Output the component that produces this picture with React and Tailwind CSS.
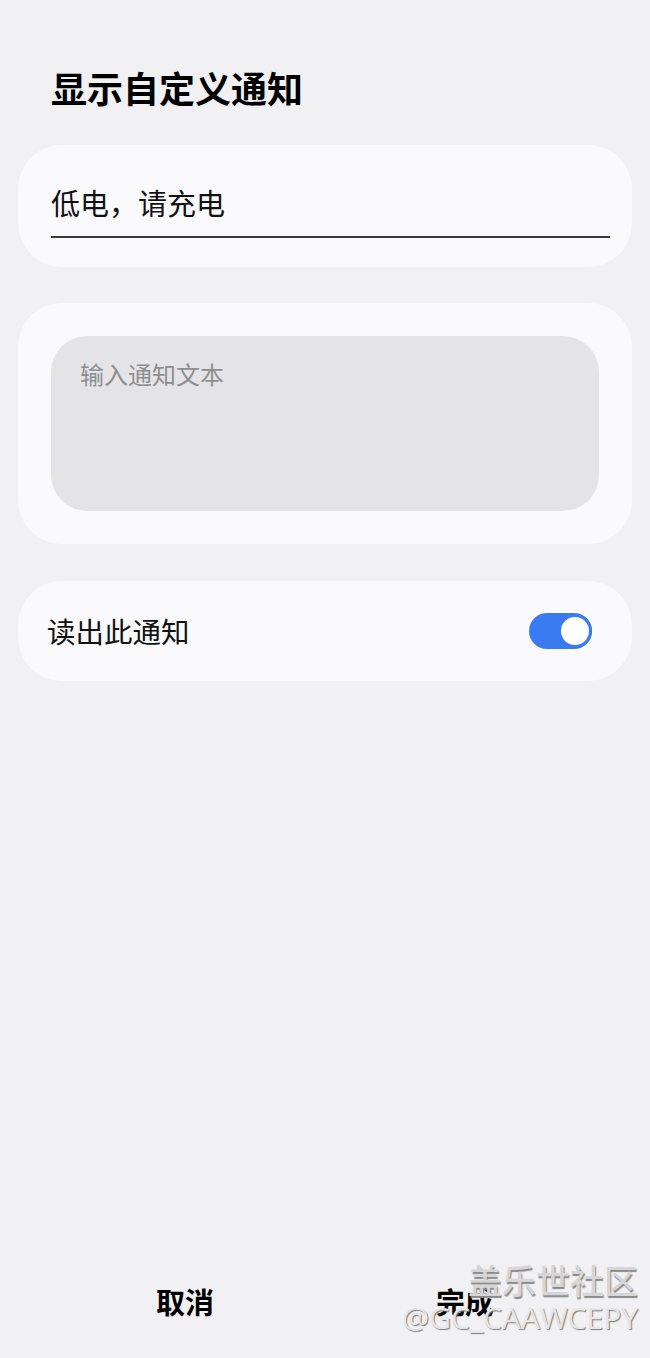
export default function App() {
  return (
    <div
      className="relative flex min-h-[1358px] w-[650px] flex-col bg-[#f1f1f3] text-black"
      style={{ fontFamily: '"Noto Sans CJK SC", "Noto Sans", sans-serif' }}
    >
      <h1 className="pl-[51px] pt-[62px] text-[36px] font-bold leading-[50px]">显示自定义通知</h1>

      <div className="mx-[18px] mt-[33px] flex h-[122px] flex-col rounded-[44px] bg-[#fafafc] pl-[33px] pr-[22px] pt-[37px]">
        <div className="text-[29px] leading-[40px] text-[#111]">低电，请充电</div>
        <div className="mt-[14px] h-[2px] w-full bg-[#3a3a3a]" />
      </div>

      <div className="mx-[18px] mt-[36px] rounded-[44px] bg-[#fafafc] p-[33px]">
        <div className="h-[175px] rounded-[36px] bg-[#e4e4e6] px-[29px] pt-[23px]">
          <div className="text-[24px] leading-[30px] text-[#8e8e90]">输入通知文本</div>
        </div>
      </div>

      <div className="mx-[18px] mt-[37px] flex h-[100px] items-center justify-between rounded-[44px] bg-[#fafafc] pl-[29px] pr-[40px]">
        <div className="text-[28.5px] leading-[36px] text-[#111]">读出此通知</div>
        <div className="flex h-[36px] w-[63px] items-center justify-end rounded-full bg-[#3b7bf2]">
          <div className="h-[34px] w-[34px] rounded-full border-[3px] border-[#3b7bf2] bg-white" />
        </div>
      </div>

      <div className="mt-auto grid grid-cols-2 px-[45px] pb-[37px]">
        <button className="text-center text-[29px] font-bold leading-[40px]">取消</button>
        <button className="text-center text-[29px] font-bold leading-[40px]">完成</button>
      </div>

      <div className="pointer-events-none absolute bottom-[22px] right-[12px] flex flex-col items-end">
        <div className="text-[34px] font-medium leading-[40px] text-[#d6d6d8] [text-shadow:1px_2px_1px_#8a8a8a]">盖乐世社区</div>
        <div
          className="text-[30px] leading-[36px] text-[#e6e6e8] [text-shadow:1px_1px_1px_#7a7a7a]"
          style={{ fontFamily: '"Open Sans", "Liberation Sans", sans-serif' }}
        >
          @GC_CAAWCEPY
        </div>
      </div>
    </div>
  );
}
